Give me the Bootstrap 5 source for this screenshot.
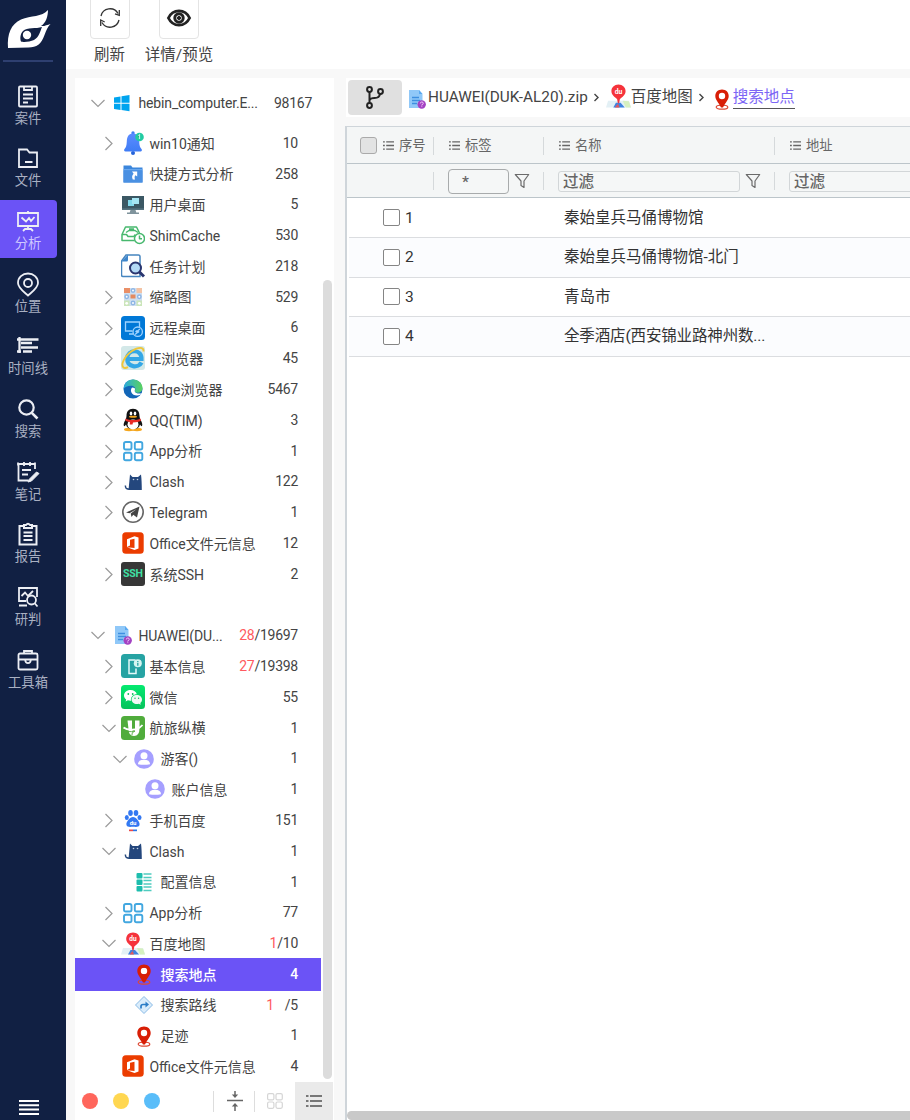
<!DOCTYPE html>
<html lang="zh-CN">
<head>
<meta charset="utf-8">
<meta name="viewport" content="width=device-width, initial-scale=1">
<title>分析</title>
<link href="https://cdn.jsdelivr.net/npm/bootstrap@5.3.0/dist/css/bootstrap.min.css" rel="stylesheet">
<style>
body{font-family:Roboto,"Noto Sans CJK SC",sans-serif;font-size:14px;color:#444;background:#f8f8f8;line-height:1.2;font-weight:400}
svg{display:block;flex:none;overflow:visible}
.side{width:66px;background:#112043;color:#a9b0c2}
.logo-box{height:74.6px}
.logo-rule{width:50px;height:2px;background:#2e3f70;margin:12px 0 0 3px}
.side-item{width:57px;height:58px;margin-bottom:4.7px;border-radius:0 4px 4px 0;font-size:13.3px;line-height:16px;padding:9px 1px 0 0;color:#a9b0c2;text-decoration:none}
.side-item svg{width:24px;height:24px;stroke:#eceef4;fill:none;stroke-width:1.8;margin-bottom:3px}
.side-item.on{background:#6b53f6;color:#cfc8ff}
.toolbar{height:69px;color:#444;font-size:15.5px}
.tool-btn{width:40px;height:43px;margin-top:-4px;border:1.5px solid #e4e4e4;border-radius:4px;background:#fff}
.tool-name{margin-top:6.5px}
.tree-panel{width:259px;margin:9px 0 0 9px}
.tree-row{height:30.79px;padding-left:26px;padding-right:36px;white-space:nowrap}
.tree-row .tree-name{padding-top:2px}
.tree-row .count{margin-left:auto;letter-spacing:-.25px;padding-top:.4px}
.tree-row.root{padding-left:15px}
.tree-row.root .tree-name{letter-spacing:-.15px}
.tree-row.top{height:49.6px;padding-right:22px}
.tree-row.lv2{padding-left:37px}
.tree-row.lv3{padding-left:48px}
.tree-row .arrow{width:16px;height:16px;fill:none;stroke:#9b9b9b;stroke-width:1.2}
.tree-row .pic{width:24px;height:24px;margin:0 4.4px 0 4px}
.tree-row.root .pic{margin:0 3.5px 0 5px}
.tree-row .hot{color:#ff5a60}
.tree-row .apart{margin-right:11px}
.tree-row.on{height:33px;margin:-1.1px 13px -1.1px 0;padding-right:23px;background:#6b53f6;color:#fff;font-weight:500}
.gap-row{height:30.79px}
.tree-thumb{position:absolute;left:248px;top:202px;width:9px;height:799px;border-radius:5px;background:#dcdcdc}
.tree-foot{height:38px}
.dot{width:16px;height:16px;border-radius:50%;margin-right:15px}
.bar-v{width:1px;background:#ddd;height:21px}
.list-btn{width:38px;height:38px;background:#eaeaea;margin-right:1px}
.main-pane{margin:9px 0 0 11px;min-width:0}
.crumbs{height:39px;font-size:15.5px;color:#444;margin-left:1px;white-space:nowrap}
.branch{width:54px;height:35px;border-radius:4px;background:#e0e0e0;margin-left:2px}
.crumb-on{color:#7c66f5;border-bottom:1px solid #555;line-height:22px}
.grid-box{margin-top:9px;border-left:2px solid #cfd5da;border-top:1.5px solid #cfd5da}
.cols{display:grid;grid-template-columns:87px 110px 231px 1fr;align-items:center}
.head-row{height:37px;background:#f4f6f6;border-bottom:1.5px solid #bcc5ca;font-size:13.3px;color:#666;padding-top:1px}
.head-row svg+span{padding-top:1px}
.filter-row{height:34px;background:#f4f6f6;border-bottom:1.5px solid #bcc5ca;color:#666;font-size:15.5px;padding-top:1px}
.cell{height:18px;border-right:1px solid #d5d9db;gap:5px}
.cell:last-child{border-right:0}
.data-list{padding-top:.5px}
.data-row{height:39.6px;border-bottom:1px solid #dbdde0;font-size:15.5px;color:#333;white-space:nowrap;margin-left:2px}
.data-row:nth-of-type(even){background:#fbfcfe}
.num{padding-left:34px;gap:5px}
.place{padding-left:18px}
.box{width:17px;height:17px;border:1.5px solid #858585;border-radius:2px;background:#fff}
.box.master{border:1px solid #aaa;border-radius:3px;background:#e2e3e3}
.filter-in{border:1px solid #d2d6d8;border-radius:3px;height:21px;line-height:21px;background:#f5f7f7;padding-left:4px;font-weight:500}
.filter-tag{border:1.5px solid #a8abac;width:61px;height:25px;line-height:25px;border-radius:4px;padding-left:13px}
.h-thumb{height:9px;background:#c9c9c9;border-radius:5px 0 0 5px}
</style>
</head>
<body>
<svg width="0" height="0" class="position-absolute">
<defs>
<linearGradient id="gBell" x2="0" y2="1"><stop stop-color="#5b8cff"/><stop offset="1" stop-color="#3f7cf5"/></linearGradient>
<linearGradient id="gEdge" x2="1" y2="0"><stop stop-color="#2aa9e0"/><stop offset="1" stop-color="#5ad35c"/></linearGradient>
<linearGradient id="gWx" x2="0" y2="1"><stop stop-color="#04ea70"/><stop offset="1" stop-color="#06c25c"/></linearGradient>
</defs>
<symbol id="down" viewBox="0 0 16 16"><path d="M1.5 5 8 11.500l6.500-6.500"/></symbol>
<symbol id="right" viewBox="0 0 16 16"><path d="m4.500 2 6.500 6.500L4.500 15"/></symbol>
<symbol id="win" viewBox="0 0 24 24"><path fill="#00a4ef" d="M3 6.500 9.500 5.500v6.200H3zM10.500 5.300 18.500 4v7.700h-8zM3 12.700h6.500v6.200L3 18zM10.500 12.700h8v7.600l-8-1.200z"/></symbol>
<symbol id="bell" viewBox="0 0 24 24"><circle cx="12" cy="2" r="1.700" fill="#3f7cf5"/><circle cx="12" cy="22" r="2" fill="#2563d9"/><path fill="url(#gBell)" d="M12 2.500c5 0 6 4 6.200 8 .2 4 .8 6 2.300 7.500.8 1 .3 2.500-1 2.500h-15c-1.300 0-1.800-1.500-1-2.500C5 16.500 5.600 14.500 5.800 10.500c.2-4 1.200-8 6.200-8z"/><circle cx="18.500" cy="6" r="4.300" fill="#22cba2"/><path stroke="#bff3e3" stroke-width="1.200" d="m17.500 5 1-1v4"/></symbol>
<symbol id="fold" viewBox="0 0 24 24"><path fill="#3b86dc" d="M2.500 3.500h7.500l1.500 2h10V20.500h-19z"/><path fill="#68a7ee" d="M2.500 7h19v1.500h-19z"/><path fill="#4a90e2" d="M2.500 8.500h19v12h-19z"/><path fill="#fff" d="M11 9.500h5.200v5l-1.700-1.300c-1 .8-1.200 2.500-.4 4.300h-2.300c-1.200-2.300-.8-4.500.8-5.800z"/></symbol>
<symbol id="desk" viewBox="0 0 24 24"><path fill="#3b5864" d="M1 3h22v14H1z"/><path fill="#55727e" d="M1 15.300h22V17H1z"/><path fill="#82d9ec" d="M7 7h6v6H7z"/><path fill="#a5e6f4" d="M11 5h7v6h-7z"/><path fill="#7f939c" d="M9.500 17h5l.8 2.500H18V21H6v-1.500h2.700z"/></symbol>
<symbol id="shim" viewBox="0 0 24 24"><g fill="none" stroke="#47b86e" stroke-width="1.500" stroke-linejoin="round"><path d="M13.500 17.500H1v-6L4.500 4h11l3 6M1 11.500h4.500l1.500 2h6l1-2M5 9.500l3-2h6l3 2M8 6h5"/><circle cx="18.500" cy="15.500" r="5" fill="#fff"/><path d="M18.500 12.500v3.200H21"/></g></symbol>
<symbol id="task" viewBox="0 0 24 24"><path fill="#fff" stroke="#4685bf" stroke-width="1.500" d="M5 1h12.500q1.500 0 1.500 1.500V22.500H2q-1.500 0-1.500-1.500V7z"/><path fill="#3d86cc" d="M.5 7.500 7 .5v5.500q0 1.500-1.500 1.500z"/><circle cx="14.500" cy="14" r="5.500" fill="#b3d9f5" stroke="#29356f" stroke-width="2"/><path stroke="#29356f" stroke-width="3" d="m18.500 18 4.500 4.500"/></symbol>
<symbol id="thumbs" viewBox="0 0 24 24"><path fill="#cfdff0" d="M3 3h18v18H3z"/><path fill="#e98f67" d="M3 3h6v5H3z"/><path fill="#f3c3a5" d="M15.500 3H21v5h-5.500z"/><path fill="#e38a60" d="M9.500 9.500h5v4h-5z"/><path fill="#cbe5ba" d="M3 15.500h5.500V21H3zM15.500 15.500H21V21h-5.500z"/><g fill="#fff" stroke="#8fb6e5" stroke-width="1.500"><circle cx="12" cy="5.500" r="1.700"/><circle cx="5.700" cy="11.800" r="1.700"/><circle cx="18.300" cy="11.800" r="1.700"/><circle cx="12" cy="18" r="1.700"/></g><circle cx="5.700" cy="18.300" r="1.400" fill="#fff"/><circle cx="18.300" cy="18.300" r="1.400" fill="#fff"/></symbol>
<symbol id="rdp" viewBox="0 0 24 24"><rect width="24" height="24" rx="3.500" fill="#0078d7"/><g fill="none" stroke="#9fd3ff" stroke-width="1.300"><path d="M11.500 15H4.500V6h14v5M8 18h4"/><circle cx="16.700" cy="15.700" r="4.700"/><path d="m14.500 16 1.500-1.500M14 18.500l2.500-2-1.500-1M19 13l-2.500 2 1.700 1.200"/></g></symbol>
<symbol id="ie" viewBox="0 0 24 24"><rect width="24" height="24" rx="3" fill="#d3e8e8"/><path fill="none" stroke="#33a7e6" stroke-width="4.200" d="M6.500 13H20.500C21 2.500 6.500 3 6.200 12.500 6 21.500 17.500 22.500 20.500 16.500"/><path fill="none" stroke="#efc63a" stroke-width="1.900" d="M22.500 5.500C23 .5 17 1 11 5 3 10.500-.5 19 2.500 21.500c1.200 1 3 .5 4.500-.3"/></symbol>
<symbol id="edge" viewBox="0 0 24 24"><circle cx="12" cy="12" r="9.500" fill="#1266b8"/><path fill="url(#gEdge)" d="M2.500 12C3 5.500 7.500 2.500 12 2.500c6 0 9.500 4.500 9.500 8.500 0 3-2.300 4.800-5 4.800-2.400 0-3.200-1.200-2.700-2 1.500-2.500-.5-5-3.800-5-3.500 0-6.500 1.500-7.500 3.200z"/><path fill="#fff" d="M11 10.500c-2.500 2.800-.5 8 5 8 2.500 0 4.500-1.300 5.500-2.800-2 1.500-6.900 1.200-7.700-1.100-.5-1.500 2-3.800-2.800-4.100z"/></symbol>
<symbol id="qq" viewBox="0 0 24 24"><ellipse cx="8" cy="21.500" rx="5" ry="1.700" fill="#f5a61d"/><ellipse cx="16" cy="21.500" rx="5" ry="1.700" fill="#f5a61d"/><path fill="#121212" d="M12 .8c4.500 0 6.500 3 6.500 7.200l.5 3c1.500 2 3 5.500 2 7-.6.500-1.500-.5-2-1.500-.5 3-3 4.500-7 4.500s-6.500-1.500-7-4.500c-.5 1-1.400 2-2 1.500-1-1.500.5-5 2-7l.5-3C5.500 3.800 7.500.8 12 .8z"/><ellipse cx="12" cy="16.500" rx="5.500" ry="5" fill="#fff"/><path fill="#e92b27" d="M4.500 10.500c4.500 2 10.500 2 15 0l.5 2.300c-2 1-4.500 1.700-8 1.800l-.5 2H8.800V14c-2-.2-3.500-.8-4.500-1.500z"/><ellipse cx="10" cy="5.500" rx="1.300" ry="2" fill="#fff"/><ellipse cx="14" cy="5.500" rx="1.300" ry="2" fill="#fff"/><ellipse cx="12" cy="8.800" rx="4" ry="1" fill="#f5a61d"/></symbol>
<symbol id="app" viewBox="0 0 24 24"><g fill="none" stroke="#42a7e0" stroke-width="1.900"><rect x="3" y="3" width="7.500" height="7.500" rx="1.800"/><rect x="13.800" y="3" width="7.500" height="7.500" rx="1.800"/><rect x="3" y="13.700" width="7.500" height="7.500" rx="1.800"/><rect x="13.800" y="13.700" width="7.500" height="7.500" rx="1.800"/></g></symbol>
<symbol id="cat" viewBox="0 0 24 24"><path fill="#24477d" d="M9 4.500 11.500 7h5.500l3-2.500c.6 4.500.8 10 .8 15.500H7.500L9 4.500z"/><path fill="none" stroke="#24477d" stroke-width="1.500" d="M9 19.200c-3.500 0-5-1-4.500-3.700"/><circle cx="12.500" cy="9.500" r=".8" fill="#c2d0e4"/><circle cx="16.500" cy="9.500" r=".8" fill="#c2d0e4"/></symbol>
<symbol id="tg" viewBox="0 0 24 24"><circle cx="12" cy="12" r="10.200" fill="#fff" stroke="#666" stroke-width="1.600"/><path fill="#444" d="M5 12.500 18.500 6.500 16 17.500l-3.700-2.700L10.500 17l-.8-3.500 6-4.500-7.200 4.200z"/></symbol>
<symbol id="office" viewBox="0 0 24 24"><rect x="1.300" y="1.300" width="21.400" height="21.400" rx="3.500" fill="#eb3c00"/><path fill="#fff" d="m6 8.300 7.500-3 4 1.300v11l-4 1.400L6 16.200l7.500.8V7.700L9 8.800v5.800l-3 1.500z"/></symbol>
<symbol id="zip" viewBox="0 0 24 24"><path fill="#90c8f8" d="M4 3H14l3.500 4v14H4z"/><path fill="#5aa9f0" d="M14 3v4h3.500z"/><path stroke="#3e8fe0" stroke-width="1.400" d="M7 10.500h7M7 13.500h8M7 16.500h5"/><circle cx="16.700" cy="17.500" r="4.200" fill="#a342c2"/><path stroke="#efc4f5" fill="none" d="M15.300 16.500q0-1.500 1.500-1.500t1.500 1.300q0 1-1.500 1.500v.7m0 .8v.8"/></symbol>
<symbol id="info" viewBox="0 0 24 24"><rect width="24" height="24" rx="3.500" fill="#26a3a3"/><path fill="none" stroke="#e4fafa" stroke-width="1.500" d="M15 14.500v5H8v-13.500h6.500"/><circle cx="16.800" cy="9.300" r="4" fill="#d5f5f1"/><path stroke="#26a3a3" stroke-width="1.300" d="M16.800 7v1m0 .8v3"/></symbol>
<symbol id="wx" viewBox="0 0 24 24"><rect width="24" height="24" rx="3.500" fill="url(#gWx)"/><path fill="#fff" d="M9.500 5C5.500 5 3 7.500 3 10.500c0 1.700.9 3 2.200 4l-.6 2 2.300-1.200q1.200.4 2.600.4h.5c-.7-4 2.600-6.500 5.800-6.400C15.300 6.700 12.800 5 9.500 5z"/><path fill="#f2f8f5" d="M15.800 10c-3 0-5.200 2-5.200 4.500s2.300 4.500 5.200 4.500q1 0 2-.3l2 1-.5-1.700c1.200-1 1.700-2.100 1.700-3.500 0-2.500-2.300-4.500-5.200-4.500z"/><g fill="#08bd59"><circle cx="7.300" cy="9" r=".9"/><circle cx="11.700" cy="9" r=".9"/><circle cx="14" cy="13.300" r=".7"/><circle cx="17.600" cy="13.300" r=".7"/></g></symbol>
<symbol id="hl" viewBox="0 0 24 24"><rect width="24" height="24" rx="3.500" fill="#50ac3c"/><path fill="#fff" d="M6.500 4.500H11V13q0 1.700 1 1.700h.7q1.300 0 1.300-1.700V4.500h4.500V12q0 8-5.500 8-5.500 0-5.500-7z"/><path fill="none" stroke="#fff" stroke-width="1.800" d="M2.500 11.500q3 2.500 9 2.200 6-.2 10-4.700"/><path stroke="#50ac3c" fill="none" stroke-width=".9" d="M6 15.500q5 .5 8-.5M11 19q-1-2.500 3-4"/></symbol>
<symbol id="user" viewBox="0 0 24 24"><circle cx="12" cy="12" r="9.800" fill="#a59fff"/><circle cx="12" cy="8.700" r="3.500" fill="#fff"/><path fill="#fff" d="M6 17.300c0-3 2-4.600 6-4.600s6 1.600 6 4.600q-6 1-12 0z"/></symbol>
<symbol id="conf" viewBox="0 0 24 24"><g fill="#1dbdad"><rect x="4.500" y="3" width="6" height="5.500" rx="1"/><rect x="4.500" y="9.500" width="6" height="5.500" rx="1"/><rect x="4.500" y="16" width="6" height="5.500" rx="1"/></g><path stroke="#4fccc0" stroke-width="1.400" d="M11.500 4h8M11.500 7.500h8M11.500 10.500h8M11.500 14h8M11.500 17h8M11.500 20.500h8"/></symbol>
<symbol id="pin" viewBox="0 0 24 24"><ellipse cx="12" cy="20.200" rx="5.800" ry="2" fill="none" stroke="#dd4a35" stroke-width="1.200"/><path fill="#fff" d="M8 6h8v6H8z"/><path fill="#d81e06" fill-rule="evenodd" d="M12 2.500c4 0 6.700 2.800 6.700 6.600 0 4-3.200 6.500-5.700 11.400h-2c-2.500-4.900-5.700-7.400-5.700-11.400 0-3.800 2.700-6.600 6.700-6.600zM12 5.800a3.200 3.200 0 1 0 0 6.400 3.200 3.200 0 0 0 0-6.400z"/></symbol>
<symbol id="route" viewBox="0 0 24 24"><path fill="#d9ecfb" stroke="#8abbe6" d="M12 3.500 20.500 12 12 20.500 3.500 12z"/><path fill="none" stroke="#2b7cc6" stroke-width="1.700" d="M9 15.500v-2q0-2 2-2h3"/><path fill="#2b7cc6" d="m13.500 8.500 3.500 3-3.500 3z"/></symbol>
<symbol id="lines" viewBox="0 0 12 12"><path stroke="#666" stroke-width="1.400" d="M0 2h2M3.500 2H12M0 6h2M3.500 6H12M0 10h2M3.500 10H12"/></symbol>
<symbol id="funnel" viewBox="0 0 16 16"><path fill="none" stroke="#6b6b6b" stroke-width="1.200" stroke-linejoin="round" d="M1.300 1.500h13.400L10 8v6.500l-3-2V8z"/></symbol>
</svg>
<svg class="d-none">
<symbol id="ssh" viewBox="0 0 24 24"><rect width="24" height="24" rx="3" fill="#373737"/><text x="12" y="15.300" text-anchor="middle" font-family="Roboto" font-size="10.500" font-weight="700" textLength="20" fill="#3fe0a5">SSH</text></symbol>
<symbol id="paw" viewBox="0 0 24 24"><g fill="#3478f2"><ellipse cx="9.500" cy="5" rx="2.300" ry="3"/><ellipse cx="15" cy="5" rx="2.300" ry="3"/><ellipse cx="5.800" cy="9.500" rx="2" ry="2.500"/><ellipse cx="18.500" cy="9.500" rx="2" ry="2.500"/><path d="M12 9c3 0 7.300 5 6.500 8-.5 2.500-4 1.800-6.500 1.800s-6 .7-6.500-1.800c-.8-3 3.500-8 6.500-8z"/></g><text x="12" y="17" font-family="Roboto" font-weight="700" font-size="6" text-anchor="middle" fill="#fff">du</text><path fill="#e84849" d="M8 21.500h4v1.700H8z"/><path fill="#2b76e5" d="M12 21.500h4v1.700h-4z"/></symbol>
<symbol id="map" viewBox="0 0 24 24"><path fill="#e3f0f5" d="M2 17h20l2 6.500H0z"/><path fill="#d6f0bf" d="m16 17 6 .5 2 6h-5z"/><path fill="#3f83e0" d="m9.500 19-2.500 4.500h11L14 19z"/><path fill="#e65659" d="m11.500 20 1.500 3.500H8.500z"/><path fill="#f5333b" d="M12 1.500c4 0 6.800 2.800 6.800 6.500 0 3.500-3.300 5.500-5.500 7.500L12.600 19.500h-1.200l-.7-4C8.500 13.500 5.200 11.500 5.200 8c0-3.700 2.800-6.500 6.800-6.500z"/><text x="12" y="10.300" font-family="Roboto" font-weight="700" font-size="6.500" text-anchor="middle" fill="#fff">du</text></symbol>
</svg>

<div class="d-flex vh-100 overflow-hidden">
  <nav class="side d-flex flex-column flex-shrink-0">
    <div class="logo-box pt-2">
      <svg width="44" height="40" viewBox="0 0 44 40" style="margin-left:7px"><path fill="#fff" fill-rule="evenodd" d="M1 40C0 26 4 16 14 11.500 24 7.500 35 9 41 2c0 6-2 13-7 16 3 .5 6-1 9.500-2-3 3-4 6-6 11-3 9-8 12.500-16 12.500zM14 33.500c2 1 9 .5 13-1.500 5-3 6-8 8-13-6 2-15 0-19 4-3 3-3 8-2 10.500z"/><circle cx="20" cy="27" r="4.200" fill="#fff"/></svg>
      <div class="logo-rule"></div>
    </div>
    <a class="side-item d-flex flex-column align-items-center"><svg viewBox="0 0 24 24"><rect x="3" y="2.500" width="18" height="20" rx="1"/><path d="M8 3v3h8V3M7 10.500h10M7 14.500h10M7 18.500h5" /></svg>案件</a>
    <a class="side-item d-flex flex-column align-items-center"><svg viewBox="0 0 24 24"><path d="M3 3.500h8l2.500 3H21v14.500H3zM9 16h7.500"/></svg>文件</a>
    <a class="side-item on d-flex flex-column align-items-center"><svg viewBox="0 0 24 24"><path d="M2 4h20v13H2zM12 2v2M12 17v3M7 22l2-2h6l2 2M5.500 8.500l4.500 4 3-3.500 2 3 3.500-4"/></svg>分析</a>
    <a class="side-item d-flex flex-column align-items-center"><svg viewBox="0 0 24 24"><path d="M12 1.500c5.500 0 10 4 10 9.500 0 5-6 9-10 12.500C8 20 2 16 2 11c0-5.500 4.500-9.500 10-9.500z"/><circle cx="12" cy="11" r="4"/></svg>位置</a>
    <a class="side-item d-flex flex-column align-items-center"><svg viewBox="0 0 24 24"><path stroke-width="2.300" d="M3.500 3v16M1 5.500h21.500M5 9h11M5 13.500h17M1 17.500h4M7 17.500h9"/></svg>时间线</a>
    <a class="side-item d-flex flex-column align-items-center"><svg viewBox="0 0 24 24"><circle cx="10.500" cy="10.500" r="7.200" stroke-width="2.200"/><path stroke-width="2.600" d="m15.800 15.800 5.700 5.700"/></svg>搜索</a>
    <a class="side-item d-flex flex-column align-items-center"><svg viewBox="0 0 24 24"><path d="M12 20.500H2.500V4H19v5M2 2.500v3M8 2v4M14 2v4M19 2.500v3M6 10h9M6 14.500h6"/><path fill="#eceef4" stroke-width="1" d="m13 19.500 7.500-7.500 2.500 1.500-7.500 7.500-3.500 1z"/></svg>笔记</a>
    <a class="side-item d-flex flex-column align-items-center"><svg viewBox="0 0 24 24"><path d="M8 4H3.500v18.500h17V4H16M8 6V3h2q2-2.500 4 0h2v3zM7.500 10.500h9M7.500 14h9M7.500 18h9" stroke-width="2"/></svg>报告</a>
    <a class="side-item d-flex flex-column align-items-center"><svg viewBox="0 0 24 24"><path d="M10 16H3V3h18v9M3 20.500h8M5.500 11 9 7.500l3 3.500 5-5"/><circle cx="15.500" cy="15" r="4.500"/><path d="m18.500 18 3 3.500"/></svg>研判</a>
    <a class="side-item d-flex flex-column align-items-center"><svg viewBox="0 0 24 24"><rect x="2.500" y="5.500" width="19" height="16" rx="1.500"/><path d="M8 5.500V3h8v2.500M2.500 11.500h19M9.200 12q.3 3.200 2.800 3.200t2.800-3.200"/></svg>工具箱</a>
    <svg class="mt-auto mb-1" width="20" height="17" viewBox="0 0 20 17" style="margin-left:19px"><path stroke="#fff" stroke-width="2" d="M0 2h20M0 6.300h20M0 10.600h20M0 15h20"/></svg>
  </nav>

  <div class="flex-grow-1 d-flex flex-column" style="min-width:0">
    <header class="toolbar bg-white d-flex flex-shrink-0">
      <div class="d-flex flex-column align-items-center" style="margin-left:24px;width:39px">
        <div class="tool-btn d-flex align-items-center justify-content-center"><svg width="22" height="22" viewBox="0 0 22 22" fill="none" stroke="#333" stroke-width="1.300"><path d="M2 9a9.200 9.200 0 0 1 17-2.500M20 13a9.200 9.200 0 0 1-17 2.500M20.300 3v5.300l-4.300-1.500M1.700 19v-6l4 2"/></svg></div>
        <span class="tool-name">刷新</span>
      </div>
      <div class="d-flex flex-column align-items-center text-nowrap" style="margin-left:14px;width:72px">
        <div class="tool-btn d-flex align-items-center justify-content-center"><svg width="24" height="24" viewBox="0 0 24 24" fill="none" stroke="#222"><path stroke-width="2.800" fill="#fff" d="M1.400 12C6 2.500 18 2.500 22.600 12 18 21.500 6 21.500 1.400 12z"/><circle cx="12" cy="12" r="4.200" stroke-width="3"/><circle cx="12" cy="12" r="1.600" fill="#222"/></svg></div>
        <span class="tool-name">详情/预览</span>
      </div>
    </header>

    <div class="d-flex flex-grow-1">
      <aside class="tree-panel bg-white position-relative d-flex flex-column flex-shrink-0">
        <div id="tree"></div>
        <div class="tree-thumb"></div>
        <div class="tree-foot d-flex align-items-center mt-auto ps-2 bg-white">
          <span class="dot" style="background:#ff665c;margin-left:-1px"></span><span class="dot" style="background:#ffd751"></span><span class="dot" style="background:#59bdf9"></span>
          <span class="bar-v" style="margin-left:38px"></span>
          <svg width="16" height="20" viewBox="0 0 16 20" style="margin-left:13px" stroke="#666" stroke-width="1.500" fill="#666"><path d="M0 9.500h16M8 0v5M8 20v-5"/><path stroke="none" d="M4.800 3.500h6.400L8 7zM4.800 15.500h6.400L8 12z"/></svg>
          <span class="bar-v" style="margin-left:11px"></span>
          <svg width="16" height="16" viewBox="0 0 16 16" style="margin-left:12px" fill="none" stroke="#d5d5d5" stroke-width="1.200"><rect x=".6" y=".6" width="6.300" height="6.300" rx="1.500"/><rect x="9" y=".6" width="6.300" height="6.300" rx="1.500"/><rect x=".6" y="9" width="6.300" height="6.300" rx="1.500"/><rect x="9" y="9" width="6.300" height="6.300" rx="1.500"/></svg>
          <div class="list-btn d-flex align-items-center justify-content-center ms-auto"><svg width="16" height="14" viewBox="0 0 16 14"><path stroke="#777" stroke-width="2" d="M0 2h2.500M4 2h12M0 7h2.500M4 7h12M0 12h2.500M4 12h12"/></svg></div>
        </div>
      </aside>

      <main class="main-pane flex-grow-1 d-flex flex-column">
        <div class="crumbs bg-white d-flex align-items-center">
          <div class="branch d-flex align-items-center justify-content-center"><svg width="20" height="23" viewBox="0 0 20 23" fill="none" stroke="#222" stroke-width="2"><circle cx="4.500" cy="3.500" r="2.400"/><circle cx="4.500" cy="19.500" r="2.400"/><circle cx="15.500" cy="5.500" r="2.400"/><path d="M4.500 6v11M4.500 14q1-2 5-2 5 0 5.500-4"/></svg></div>
          <svg width="24" height="24" style="margin:3px -1px 0 3px"><use href="#zip"/></svg><span style="font-size:15.300px">HUAWEI(DUK-AL20).zip</span>
          <svg width="7" height="9" viewBox="0 0 7 9" style="margin:0 6px 0 5px"><path d="m1.500 1 3.500 3.500L1.500 8" fill="none" stroke="#444" stroke-width="1.400"/></svg>
          <svg width="25" height="25" style="margin-top:-5px"><use href="#map"/></svg><span>百度地图</span>
          <svg width="7" height="9" viewBox="0 0 7 9" style="margin:0 5px"><path d="m1.500 1 3.500 3.500L1.500 8" fill="none" stroke="#444" stroke-width="1.400"/></svg>
          <svg width="24" height="24" style="margin:3px -1px 0 0"><use href="#pin"/></svg><span class="crumb-on">搜索地点</span>
        </div>
        <div class="grid-box flex-grow-1 d-flex flex-column bg-white">
          <div class="head-row cols">
            <div class="cell d-flex align-items-center"><span class="box master" style="margin:0 1px 0 13px"></span><svg width="11" height="11"><use href="#lines"/></svg><span>序号</span></div>
            <div class="cell d-flex align-items-center" style="padding-left:15px"><svg width="11" height="11"><use href="#lines"/></svg><span>标签</span></div>
            <div class="cell d-flex align-items-center" style="padding-left:15px"><svg width="11" height="11"><use href="#lines"/></svg><span>名称</span></div>
            <div class="cell d-flex align-items-center" style="padding-left:15px"><svg width="11" height="11"><use href="#lines"/></svg><span>地址</span></div>
          </div>
          <div class="filter-row cols">
            <div class="cell"></div>
            <div class="cell d-flex align-items-center" style="padding-left:14px"><div class="filter-in filter-tag">*</div><svg width="16" height="16"><use href="#funnel"/></svg></div>
            <div class="cell d-flex align-items-center" style="padding-left:14px"><div class="filter-in" style="width:182px">过滤</div><svg width="16" height="16"><use href="#funnel"/></svg></div>
            <div class="cell d-flex align-items-center" style="padding-left:14px"><div class="filter-in" style="width:182px">过滤</div></div>
          </div>
          <section class="data-list">
            <div class="data-row cols"><div class="num d-flex align-items-center"><span class="box"></span>1</div><div></div><div class="place">秦始皇兵马俑博物馆</div></div>
            <div class="data-row cols"><div class="num d-flex align-items-center"><span class="box"></span>2</div><div></div><div class="place">秦始皇兵马俑博物馆-北门</div></div>
            <div class="data-row cols"><div class="num d-flex align-items-center"><span class="box"></span>3</div><div></div><div class="place">青岛市</div></div>
            <div class="data-row cols"><div class="num d-flex align-items-center"><span class="box"></span>4</div><div></div><div class="place" style="letter-spacing:-.15px">全季酒店(西安锦业路神州数...</div></div>
          </section>
          <div class="h-thumb mt-auto"></div>
        </div>
      </main>
    </div>
  </div>
</div>
<script src="https://cdn.jsdelivr.net/npm/bootstrap@5.3.0/dist/js/bootstrap.bundle.min.js"></script>
<script>
// [row class, arrow, icon, label, total, highlighted count]
const rows = [
  ['root top','down','win','hebin_computer.E...','98167'],
  ['','right','bell','win10通知','10'],
  ['','','fold','快捷方式分析','258'],
  ['','','desk','用户桌面','5'],
  ['','','shim','ShimCache','530'],
  ['','','task','任务计划','218'],
  ['','right','thumbs','缩略图','529'],
  ['','right','rdp','远程桌面','6'],
  ['','right','ie','IE浏览器','45'],
  ['','right','edge','Edge浏览器','5467'],
  ['','right','qq','QQ(TIM)','3'],
  ['','right','app','App分析','1'],
  ['','right','cat','Clash','122'],
  ['','right','tg','Telegram','1'],
  ['','','office','Office文件元信息','12'],
  ['','right','ssh','系统SSH','2'],
  null,
  ['root','down','zip','HUAWEI(DU...','/19697','28'],
  ['','right','info','基本信息','/19398','27'],
  ['','right','wx','微信','55'],
  ['','down','hl','航旅纵横','1'],
  ['lv2','down','user','游客()','1'],
  ['lv3','','user','账户信息','1'],
  ['','right','paw','手机百度','151'],
  ['','down','cat','Clash','1'],
  ['lv2','','conf','配置信息','1'],
  ['','right','app','App分析','77'],
  ['','down','map','百度地图','/10','1'],
  ['lv2 on','','pin','搜索地点','4'],
  ['lv2','','route','搜索路线','/5','1','apart'],
  ['lv2','','pin','足迹','1'],
  ['','','office','Office文件元信息','4']
];
document.getElementById('tree').innerHTML = rows.map(r => {
  if (!r) return '<div class="gap-row"></div>';
  const [cls, arrow, icon, label, total, hot, gap] = r;
  return `<div class="tree-row ${cls} d-flex align-items-center">
    <svg class="arrow">${arrow ? `<use href="#${arrow}"/>` : ''}</svg>
    <svg class="pic"><use href="#${icon}"/></svg>
    <span class="tree-name">${label}</span>
    <span class="count">${hot ? `<span class="hot ${gap || ''}">${hot}</span>` : ''}${total}</span>
  </div>`;
}).join('');
</script>
</body>
</html>
